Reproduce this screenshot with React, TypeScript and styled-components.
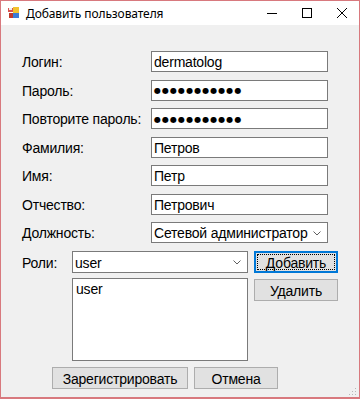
import React from "react";
import styled, { createGlobalStyle } from "styled-components";

const Global = createGlobalStyle`
  html, body { margin: 0; padding: 0; background: #ffffff; }
  * { box-sizing: border-box; }
`;

const Window = styled.div`
  width: 360px;
  height: 399px;
  border: 1px solid #d8797e;
  border-bottom-width: 2px;
  background: #f0f0f0;
  display: flex;
  flex-direction: column;
  position: relative;
  font-family: "Liberation Sans", Arial, sans-serif;
  font-size: 14px;
  letter-spacing: -0.2px;
  color: #000;
`;

const TitleBar = styled.div`
  height: 24px;
  background: #ffffff;
  display: flex;
  align-items: center;
  padding-left: 7px;
  font-family: "Noto Sans", "Open Sans", sans-serif;
  font-size: 12px;
  letter-spacing: -0.1px;
  color: #000;
`;

const TitleText = styled.span`
  margin-left: 6px;
  flex: 1;
`;

const Caption = styled.div`
  width: 35px;
  height: 24px;
  display: flex;
  align-items: center;
  justify-content: center;
`;

const Body = styled.div`
  flex: 1;
  display: flex;
  flex-direction: column;
  padding: 26px 0 0 21px;
`;

const FormGrid = styled.div`
  display: grid;
  grid-template-columns: 129px 177px;
  grid-auto-rows: 21px;
  row-gap: 7.5px;
`;

const Label = styled.div`
  display: flex;
  align-items: center;
  white-space: nowrap;
  padding-top: 1px;
`;

const Field = styled.div<{ $dots?: boolean }>`
  border: 1px solid #7a7a7a;
  background: #fff;
  display: flex;
  align-items: center;
  padding-left: 2px;
  padding-top: 1px;
  white-space: nowrap;
  overflow: hidden;
  ${(p) =>
    p.$dots
      ? `font-family: "DejaVu Sans", sans-serif; font-size: 8px; letter-spacing: 1.06px; padding-left: 2px;`
      : ``}
`;

const Combo = styled(Field)`
  padding-right: 6px;
  justify-content: space-between;
`;

const RolesGrid = styled.div`
  margin-top: 8px;
  display: grid;
  grid-template-columns: 44px 176px 84px;
  grid-template-rows: 22px 83px;
  column-gap: 6px;
  row-gap: 5px;
`;

const Button = styled.div<{ $focused?: boolean; $width: number }>`
  width: ${(p) => p.$width}px;
  height: 22px;
  background: #e1e1e1;
  border: 1px solid ${(p) => (p.$focused ? "#0078d7" : "#adadad")};
  display: flex;
  align-items: center;
  justify-content: center;
  position: relative;
  padding-top: 1px;
  ${(p) =>
    p.$focused
      ? `box-shadow: inset 0 0 0 1px #0078d7; outline: 1px dotted #000; outline-offset: -4px;`
      : ``}
`;

const SideButton = styled(Button)`
  align-self: start;
  margin-top: 1px;
`;

const ListBox = styled.div`
  border: 1px solid #7a7a7a;
  background: #fff;
  padding: 2px 0 0 3px;
`;

const Footer = styled.div`
  margin-top: 6px;
  padding-left: 30px;
  display: flex;
  gap: 6px;
`;

const Grip = styled.svg`
  position: absolute;
  right: 2px;
  bottom: 1px;
`;

const Chevron = () => (
  <svg width="8" height="5" viewBox="0 0 8 5">
    <polyline points="0.5,0.5 4,4 7.5,0.5" fill="none" stroke="#606060" strokeWidth="1" />
  </svg>
);

const AppIcon = () => (
  <svg width="12" height="12" viewBox="0 0 12 12">
    <rect x="0" y="1" width="5" height="4" fill="#d9534f" />
    <rect x="5" y="0" width="6" height="6" fill="#f2c12e" />
    <rect x="1" y="6" width="4" height="5" fill="#c0392b" />
    <rect x="5" y="6" width="6" height="5" fill="#3a7bd5" />
    <rect x="1" y="1" width="3" height="2" fill="#eee" />
  </svg>
);

export default function App() {
  return (
    <>
      <Global />
      <Window>
        <TitleBar>
          <AppIcon />
          <TitleText>Добавить пользователя</TitleText>
          <Caption>
            <svg width="10" height="10" viewBox="0 0 10 10">
              <line x1="0" y1="5.5" x2="10" y2="5.5" stroke="#000" strokeWidth="1" />
            </svg>
          </Caption>
          <Caption>
            <svg width="10" height="10" viewBox="0 0 10 10">
              <rect x="0.5" y="0.5" width="9" height="9" fill="none" stroke="#000" strokeWidth="1" />
            </svg>
          </Caption>
          <Caption>
            <svg width="10" height="10" viewBox="0 0 10 10">
              <line x1="0" y1="0" x2="10" y2="10" stroke="#000" strokeWidth="1" />
              <line x1="10" y1="0" x2="0" y2="10" stroke="#000" strokeWidth="1" />
            </svg>
          </Caption>
        </TitleBar>
        <Body>
          <FormGrid>
            <Label>Логин:</Label>
            <Field>dermatolog</Field>
            <Label>Пароль:</Label>
            <Field $dots>●●●●●●●●●●●</Field>
            <Label>Повторите пароль:</Label>
            <Field $dots>●●●●●●●●●●●</Field>
            <Label>Фамилия:</Label>
            <Field>Петров</Field>
            <Label>Имя:</Label>
            <Field>Петр</Field>
            <Label>Отчество:</Label>
            <Field>Петрович</Field>
            <Label>Должность:</Label>
            <Combo>
              <span>Сетевой администратор</span>
              <Chevron />
            </Combo>
          </FormGrid>
          <RolesGrid>
            <Label>Роли:</Label>
            <Combo>
              <span>user</span>
              <Chevron />
            </Combo>
            <Button $focused $width={84}>Добавить</Button>
            <div />
            <ListBox>user</ListBox>
            <SideButton $width={84}>Удалить</SideButton>
          </RolesGrid>
          <Footer>
            <Button $width={136}>Зарегистрировать</Button>
            <Button $width={84}>Отмена</Button>
          </Footer>
        </Body>
        <Grip width="8" height="8" viewBox="0 0 8 8">
          <rect x="6" y="0" width="1" height="1" fill="#b8b8b8" />
          <rect x="3" y="3" width="1" height="1" fill="#b8b8b8" />
          <rect x="6" y="3" width="1" height="1" fill="#b8b8b8" />
          <rect x="0" y="6" width="1" height="1" fill="#b8b8b8" />
          <rect x="3" y="6" width="1" height="1" fill="#b8b8b8" />
          <rect x="6" y="6" width="1" height="1" fill="#b8b8b8" />
        </Grip>
      </Window>
    </>
  );
}
